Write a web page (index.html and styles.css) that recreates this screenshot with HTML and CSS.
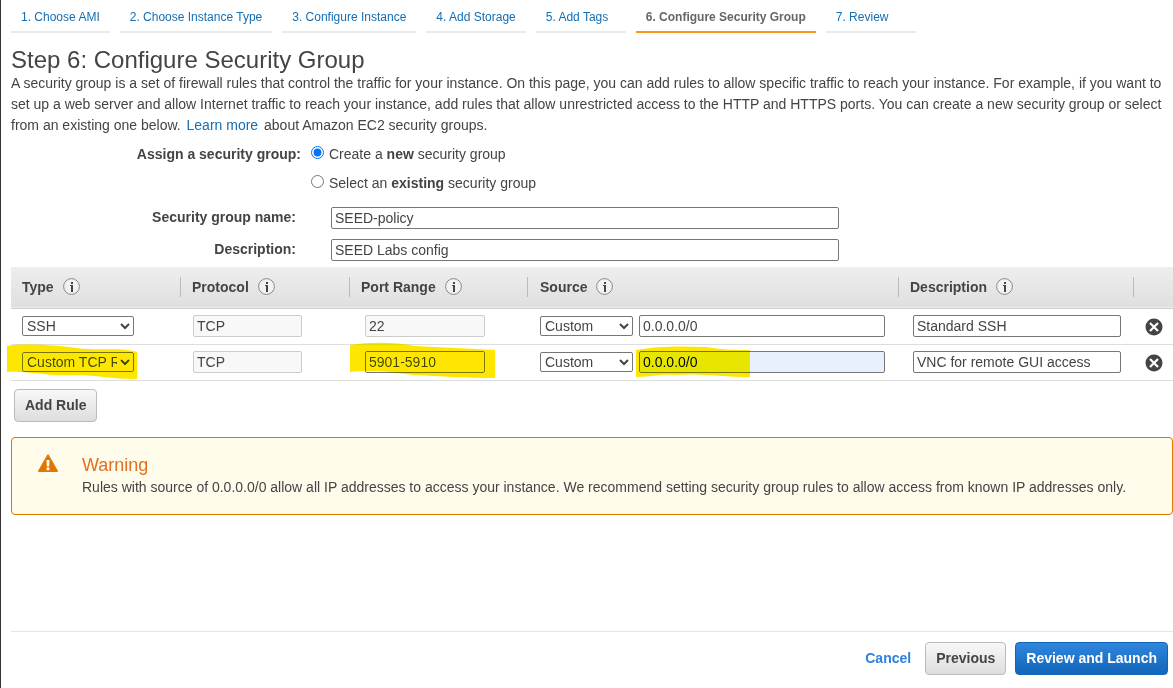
FILE: index.html
```html
<!DOCTYPE html>
<html lang="en">
<head>
<meta charset="utf-8">
<title>Step 6: Configure Security Group</title>
<meta name="viewport" content="width=device-width, initial-scale=1">
<link rel="stylesheet" href="styles.css">
</head>
<body>
<svg class="defs" aria-hidden="true">
  <symbol id="info" viewBox="0 0 18 18">
    <circle cx="8.500" cy="8.500" r="7.900" fill="#f2f2f2" stroke="#888"/>
    <path d="M8 4h2v2H8zM7 7h3v7H8V8H7z" fill="#444"/>
  </symbol>
  <symbol id="remove" viewBox="0 0 18 18">
    <circle cx="9" cy="9" r="8.5" fill="#444"/>
    <path d="M5 5l8 8M13 5l-8 8" stroke="#fff" stroke-width="2.200"/>
  </symbol>
</svg>
<div class="page">
  <nav class="steps">
    <a class="step" href="#ami">1. Choose AMI</a>
    <a class="step" href="#type">2. Choose Instance Type</a>
    <a class="step" href="#instance">3. Configure Instance</a>
    <a class="step" href="#storage">4. Add Storage</a>
    <a class="step" href="#tags">5. Add Tags</a>
    <a class="step step-current" href="#security" aria-current="step">6. Configure Security Group</a>
    <a class="step" href="#review">7. Review</a>
  </nav>
  <main class="content">
    <h1 class="title">Step 6: Configure Security Group</h1>
    <p class="intro">A security group is a set of firewall rules that control the traffic for your instance. On this page, you can add rules to allow specific traffic to reach your instance. For example, if you want to set up a web server and allow Internet traffic to reach your instance, add rules that allow unrestricted access to the HTTP and HTTPS ports. You can create a new security group or select from an existing one below. <a class="more" href="#learn">Learn more</a> about Amazon EC2 security groups.</p>

    <div class="assign" role="radiogroup" aria-labelledby="assign-label">
      <span class="assign-label" id="assign-label">Assign a security group:</span>
      <div class="choices">
        <label class="choice"><input class="radio" type="radio" name="group" checked><span>Create a <b>new</b> security group</span></label>
        <label class="choice"><input class="radio" type="radio" name="group"><span>Select an <b>existing</b> security group</span></label>
      </div>
    </div>
    <div class="fields">
      <label class="field-label" for="name">Security group name:</label>
      <input class="box" id="name" type="text" value="SEED-policy">
      <label class="field-label" for="desc">Description:</label>
      <input class="box" id="desc" type="text" value="SEED Labs config">
    </div>

    <table class="rules">
      <colgroup><col class="c-type"><col class="c-protocol"><col class="c-port"><col><col class="c-desc"><col class="c-remove"></colgroup>
      <thead>
        <tr>
          <th><div class="head">Type <svg class="icon"><use href="#info"/></svg></div></th>
          <th><div class="head">Protocol <svg class="icon"><use href="#info"/></svg></div></th>
          <th><div class="head">Port Range <svg class="icon"><use href="#info"/></svg></div></th>
          <th><div class="head head-source">Source <svg class="icon"><use href="#info"/></svg></div></th>
          <th><div class="head">Description <svg class="icon"><use href="#info"/></svg></div></th>
          <th></th>
        </tr>
      </thead>
      <tbody>
        <tr>
          <td><div class="cell"><select class="select select-type" aria-label="Type"><option>SSH</option></select></div></td>
          <td><div class="cell cell-protocol"><input class="box" aria-label="Protocol" value="TCP" disabled></div></td>
          <td><div class="cell cell-port"><input class="box" aria-label="Port range" value="22" disabled></div></td>
          <td><div class="cell cell-source"><select class="select" aria-label="Source type"><option>Custom</option></select><input class="box" aria-label="Source" value="0.0.0.0/0"></div></td>
          <td><div class="cell cell-desc"><input class="box" aria-label="Description" value="Standard SSH"></div></td>
          <td><button class="remove" type="button" aria-label="Remove rule"><svg class="icon"><use href="#remove"/></svg></button></td>
        </tr>
        <tr>
          <td><div class="cell"><select class="select select-type" aria-label="Type"><option>Custom TCP Rule</option></select>
            <svg class="marker marker-type" viewBox="0 0 131 36"><path d="M0 2C18-1 47 1 70 4C90 7 115 3 130 8V35C105 35 87 31 70 31C42 33 20 26 0 28Z"/></svg></div></td>
          <td><div class="cell cell-protocol"><input class="box" aria-label="Protocol" value="TCP" disabled></div></td>
          <td><div class="cell cell-port"><input class="box" aria-label="Port range" value="5901-5910">
            <svg class="marker marker-port" viewBox="0 0 146 36"><path d="M0 3C20 0 45 0 65 4C90 5 120 7 145 8V36C115 36 91 34 66 33C45 32 35 27 0 30Z"/></svg></div></td>
          <td><div class="cell cell-source"><select class="select" aria-label="Source type"><option>Custom</option></select><input class="box box-filled" aria-label="Source" value="0.0.0.0/0">
            <svg class="marker marker-source" viewBox="0 0 115 32"><path d="M0 4C20 0 45 0 70 1C88 4 100 4 114 4V31C90 31 60 27 38 29C25 28 15 31 0 31Z"/></svg></div></td>
          <td><div class="cell cell-desc"><input class="box" aria-label="Description" value="VNC for remote GUI access"></div></td>
          <td><button class="remove" type="button" aria-label="Remove rule"><svg class="icon"><use href="#remove"/></svg></button></td>
        </tr>
      </tbody>
    </table>
    <button class="button add" type="button">Add Rule</button>

    <section class="warning">
      <svg class="warning-icon" viewBox="0 0 20 19"><path d="M9 1.200Q10-.5 11 1.200L19.700 16.500Q20.200 18 18.700 18H1.300Q-.2 18 .3 16.500Z" fill="#e07700"/><path d="M8.500 6h3l-.4 6.500H8.900zM8.600 13.600h2.800v2.600H8.600z" fill="#fff"/></svg>
      <div>
        <h2 class="warning-title">Warning</h2>
        <p class="warning-text">Rules with source of 0.0.0.0/0 allow all IP addresses to access your instance. We recommend setting security group rules to allow access from known IP addresses only.</p>
      </div>
    </section>
  </main>
  <footer class="footer">
    <a class="cancel" href="#cancel">Cancel</a>
    <button class="button" type="button">Previous</button>
    <button class="button button-primary" type="button">Review and Launch</button>
  </footer>
</div>
</body>
</html>
```

FILE: styles.css
```css
* { box-sizing: border-box; }
body {
  margin: 0;
  color: #444;
  background: #fff;
  font: 14px/21px "Liberation Sans", Arial, sans-serif;
}
.defs { display: none; }
.page {
  display: flex;
  flex-direction: column;
  min-height: 100vh;
  padding-left: 10px;
  border-left: 1px solid #333;
}
.steps { display: flex; gap: 10px; }
.step {
  min-width: 90px;
  padding: 9px 10px 6px;
  border-bottom: 2px solid #eaeaea;
  color: #146eb4;
  font-size: 12px;
  line-height: 16px;
  text-decoration: none;
}
.step-current { border-color: #f7981d; color: #666; font-weight: bold; }
.content { flex: 1; }
.title { margin: 14px 0 0; font-size: 24px; font-weight: normal; line-height: 26px; }
.intro { margin: 0; padding-right: 8px; }
.more { padding: 0 2px; color: #146eb4; text-decoration: none; }
.assign { display: flex; gap: 10px; margin-top: 8px; }
.assign-label { width: 290px; text-align: right; font-weight: bold; }
.choices { display: grid; gap: 8px; }
.choice { display: flex; gap: 5px; }
.radio { width: 13px; height: 13px; margin: 2px 0 0; }
.fields {
  display: grid;
  grid-template-columns: 285px minmax(0, 508px);
  gap: 10px 35px;
  margin: 13px 0 6px;
}
.field-label { text-align: right; font-weight: bold; }
.box {
  width: 100%;
  min-width: 0;
  height: 22px;
  padding: 0 3px;
  border: 1px solid #767676;
  border-radius: 2px;
  background: #fff;
  color: #444;
  font: inherit;
}
.box:disabled { border-color: #ccc; background: #f8f8f8; }
.box-filled { background: #e8f0fe; color: #000; }
.select {
  flex: none;
  width: 93px;
  height: 20px;
  padding: 0;
  border: 1px solid #767676;
  border-radius: 2px;
  background: #fff;
  color: #444;
  font: inherit;
}
.select-type { width: 112px; }
.rules { width: 100%; table-layout: fixed; border-collapse: collapse; }
.c-type { width: 170px; }
.c-protocol { width: 169px; }
.c-port { width: 178px; }
.c-desc { width: 235px; }
.c-remove { width: 39px; }
.rules thead tr {
  height: 41px;
  border-bottom: 1px solid #ccc;
  background: linear-gradient(#eee, #dfdfdf);
}
.rules tbody tr { height: 36px; border-bottom: 1px solid #ddd; }
.rules th, .rules td { padding: 0; text-align: left; }
.head {
  display: flex;
  align-items: center;
  gap: 9px;
  height: 20px;
  padding-left: 11px;
  border-right: 1px solid #bbb;
}
.icon { display: block; width: 18px; height: 18px; }
.cell { position: relative; display: flex; align-items: center; gap: 6px; padding-left: 11px; }
.cell-protocol { padding: 0 48px 0 12px; }
.cell-port { padding: 0 43px 0 15px; }
.cell-source { padding: 0 14px 0 12px; }
.head-source { padding-left: 12px; }
.cell-desc { padding: 0 13px 0 14px; }
.remove { display: block; margin: 2px 0 0 11px; padding: 0; border: 0; background: none; }
.marker { position: absolute; fill: #ffe600; mix-blend-mode: darken; pointer-events: none; }
.marker-type { left: -4px; top: -8px; width: 131px; height: 36px; }
.marker-port { left: 0; top: -9px; width: 146px; height: 36px; }
.marker-source { left: 108px; top: -5px; width: 115px; height: 32px; }
.button {
  height: 33px;
  padding: 0 10px 1px;
  border: 1px solid #bbb;
  border-radius: 4px;
  background: linear-gradient(#f8f8f8, #ddd);
  color: #444;
  font: bold 14px/20px "Liberation Sans", Arial, sans-serif;
}
.add { display: block; margin: 8px 0 15px 3px; }
.button-primary {
  border-color: #1265b9;
  background: linear-gradient(#3085dd, #1166bb);
  color: #fff;
}
.warning {
  display: flex;
  gap: 24px;
  min-height: 77px;
  padding: 16px 26px;
  border: 1px solid #e07700;
  border-radius: 4px;
  background: #fffceb;
}
.warning-icon { flex: none; width: 20px; height: 19px; }
.warning-title { margin: 0; color: #e07020; font-size: 18px; font-weight: normal; line-height: 23px; }
.warning-text { margin: 0; }
.footer {
  display: flex;
  align-items: center;
  justify-content: flex-end;
  gap: 9px;
  padding: 10px 5px 13px 0;
  border-top: 1px solid #e5e5e5;
}
.cancel { margin-right: 5px; color: #3080e0; font-weight: bold; text-decoration: none; }
```
